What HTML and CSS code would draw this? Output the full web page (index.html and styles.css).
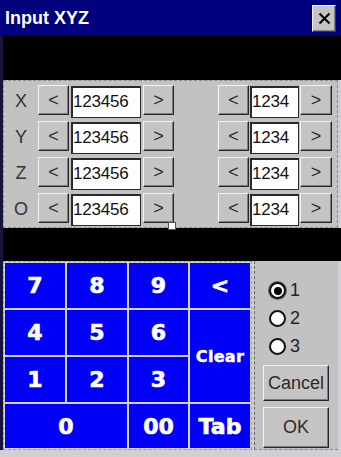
FILE: index.html
```html
<!DOCTYPE html>
<html>
<head>
<meta charset="utf-8">
<link rel="stylesheet" href="styles.css">
</head>
<body>
<div class="title">
  <span class="title-text">Input XYZ</span>
  <div class="close">
    <svg width="13" height="13" viewBox="0 0 13 13"><path d="M1.5 1.5 L11.5 11.5 M11.5 1.5 L1.5 11.5" stroke="#000" stroke-width="2" fill="none"/></svg>
  </div>
</div>
<div class="content">
  <div class="band band-top"></div>
  <div class="coords">
    <div class="row">
      <span class="lbl">X</span>
      <div class="grp">
        <span class="btn sb">&lt;</span><span class="field wide">123456</span><span class="btn sb">&gt;</span>
      </div>
      <div class="grp grp-r">
        <span class="btn sb">&lt;</span><span class="field narrow">1234</span><span class="btn sb last">&gt;</span>
      </div>
    </div>
    <div class="row">
      <span class="lbl">Y</span>
      <div class="grp">
        <span class="btn sb">&lt;</span><span class="field wide">123456</span><span class="btn sb">&gt;</span>
      </div>
      <div class="grp grp-r">
        <span class="btn sb">&lt;</span><span class="field narrow">1234</span><span class="btn sb last">&gt;</span>
      </div>
    </div>
    <div class="row">
      <span class="lbl">Z</span>
      <div class="grp">
        <span class="btn sb">&lt;</span><span class="field wide">123456</span><span class="btn sb">&gt;</span>
      </div>
      <div class="grp grp-r">
        <span class="btn sb">&lt;</span><span class="field narrow">1234</span><span class="btn sb last">&gt;</span>
      </div>
    </div>
    <div class="row">
      <span class="lbl">O</span>
      <div class="grp">
        <span class="btn sb">&lt;</span><span class="field wide">123456</span><span class="btn sb">&gt;</span>
      </div>
      <div class="grp grp-r">
        <span class="btn sb">&lt;</span><span class="field narrow">1234</span><span class="btn sb last">&gt;</span>
      </div>
    </div>
    <span class="handle"></span>
  </div>
  <div class="band band-mid"></div>
  <div class="bottom">
    <div class="keypad">
      <span class="key">7</span>
      <span class="key">8</span>
      <span class="key">9</span>
      <span class="key">&lt;</span>
      <span class="key">4</span>
      <span class="key">5</span>
      <span class="key">6</span>
      <span class="key clear">Clear</span>
      <span class="key">1</span>
      <span class="key">2</span>
      <span class="key">3</span>
      <span class="key zero">0</span>
      <span class="key">00</span>
      <span class="key">Tab</span>
    </div>
    <div class="side">
      <div class="radios">
        <div class="radio-row"><span class="radio on"></span><span class="rlbl">1</span></div>
        <div class="radio-row"><span class="radio"></span><span class="rlbl">2</span></div>
        <div class="radio-row"><span class="radio"></span><span class="rlbl">3</span></div>
      </div>
      <span class="btn act cancel">Cancel</span>
      <span class="btn act ok">OK</span>
    </div>
  </div>
</div>
</body>
</html>
```
FILE: styles.css
```css
html, body {
  margin: 0;
  padding: 0;
}
body {
  width: 341px;
  height: 457px;
  overflow: hidden;
  background: #cfcfd4;
  font-family: "Liberation Sans", Arial, sans-serif;
}
.title {
  height: 36px;
  background: #00007e;
  display: flex;
  align-items: center;
  justify-content: space-between;
  padding: 0 5px 0 5px;
  box-sizing: border-box;
}
.title-text {
  color: #fff;
  font-weight: bold;
  font-size: 18px;
  margin-top: 1px;
}
.close {
  width: 24px;
  height: 27px;
  box-sizing: border-box;
  background: #c4c4c4;
  border: 1px solid;
  border-color: #f4f4f4 #3a3a3a #3a3a3a #f4f4f4;
  box-shadow: inset -1px -1px #808080;
  display: flex;
  align-items: center;
  justify-content: center;
  margin-top: 1px;
}
.content {
  border-left: 3px solid #14143c;
  height: 414px;
}
.band {
  background: #000;
}
.band-top {
  height: 44px;
}
.band-mid {
  height: 33px;
}
.coords {
  position: relative;
  height: 148px;
  margin-right: 3px;
  box-sizing: border-box;
  background: #c2c2c2;
  border: 1px dashed #8a8a8a;
  padding: 4px 5px 0 0;
  display: flex;
  flex-direction: column;
  gap: 5px;
}
.row {
  display: flex;
  align-items: flex-start;
  height: 31px;
}
.lbl {
  width: 34px;
  text-align: center;
  font-size: 18px;
  color: #333;
  line-height: 33px;
}
.grp {
  display: flex;
  gap: 2px;
  align-items: flex-start;
}
.grp-r {
  margin-left: auto;
  gap: 1px;
}
.btn {
  box-sizing: border-box;
  background: #c4c4c4;
  border: 1px solid;
  border-color: #f2f2f2 #262626 #262626 #f2f2f2;
  box-shadow: inset -1px -1px #7c7c7c;
  display: flex;
  align-items: center;
  justify-content: center;
  color: #2a2a2a;
}
.sb {
  width: 31px;
  height: 30px;
  font-size: 18px;
}
.sb.last {
  width: 32px;
}
.field {
  box-sizing: border-box;
  height: 32px;
  margin-top: 1px;
  background: #fff;
  border: 2px solid #2a2a2a;
  border-right-width: 1px;
  border-bottom-width: 1px;
  font-size: 17px;
  color: #111;
  line-height: 27px;
  padding-left: 0;
  letter-spacing: -0.2px;
}
.wide {
  width: 70px;
}
.narrow {
  width: 49px;
}
.handle {
  position: absolute;
  left: 164px;
  top: 141px;
  width: 6px;
  height: 6px;
  background: #fff;
  border: 1px solid #555;
}
.bottom {
  display: flex;
  height: 189px;
}
.keypad {
  width: 249px;
  box-sizing: border-box;
  border: 1px dashed #9a9ab0;
  padding: 1px;
  background: #d2d2d2;
  display: grid;
  grid-template-columns: 60px 60px 59px 60px;
  grid-template-rows: 45px 45px 45px 44px;
  gap: 2px;
}
.key {
  background: #0000f8;
  color: #fff;
  font-family: "DejaVu Sans", sans-serif;
  font-weight: bold;
  font-size: 22px;
  -webkit-text-stroke: 0.7px #fff;
  display: flex;
  align-items: center;
  justify-content: center;
}
.clear {
  grid-column: 4;
  grid-row: 2 / span 2;
  font-size: 16px;
  letter-spacing: 0.3px;
  -webkit-text-stroke: 0.5px #fff;
}
.zero {
  grid-column: 1 / span 2;
}
.side {
  margin-left: 2px;
  width: 84px;
  box-sizing: border-box;
  background: #c2c2c2;
  border-left: 1px dashed #6a6a6a;
  border-bottom: 1px dashed #8a8a8a;
  display: flex;
  flex-direction: column;
  padding: 21px 0 0 8px;
}
.radios {
  display: flex;
  flex-direction: column;
  gap: 11px;
}
.radio-row {
  display: flex;
  align-items: center;
  height: 17px;
  gap: 4px;
  padding-left: 6px;
}
.radio {
  width: 17px;
  height: 17px;
  box-sizing: border-box;
  border-radius: 50%;
  background: #fff;
  border: 2px solid #111;
  position: relative;
}
.radio.on {
  border-width: 2px;
  box-shadow: 0 0 0 1px #666;
}
.radio.on::after {
  content: "";
  position: absolute;
  left: 2.5px;
  top: 2.5px;
  width: 8px;
  height: 8px;
  border-radius: 50%;
  background: #000;
}
.rlbl {
  font-size: 18px;
  color: #222;
}
.act {
  width: 66px;
  font-size: 18px;
}
.cancel {
  height: 36px;
  margin-top: 10px;
}
.ok {
  height: 41px;
  margin-top: 6px;
}
```
